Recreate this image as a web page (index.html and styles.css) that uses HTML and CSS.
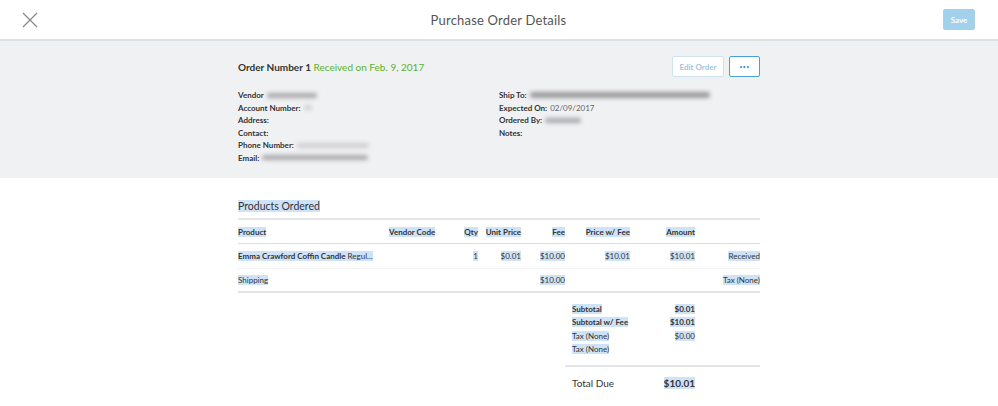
FILE: index.html
```html
<!DOCTYPE html>
<html>
<head>
<meta charset="utf-8">
<link rel="stylesheet" href="styles.css">
</head>
<body>
<header class="topbar">
  <div class="bar-left">
    <button class="close" aria-label="Close">
      <svg width="16" height="16" viewBox="0 0 16 16"><path d="M1 1L15 15M15 1L1 15" stroke="#8a8a8a" stroke-width="1.3" fill="none"/></svg>
    </button>
  </div>
  <h1 class="title">Purchase Order Details</h1>
  <div class="bar-right">
    <button class="save">Save</button>
  </div>
</header>

<section class="summary">
  <div class="wrap">
    <div class="summary-head">
      <div class="order-num"><b>Order Number 1</b> <span class="status">Received on Feb. 9, 2017</span></div>
      <div class="actions">
        <button class="btn-edit">Edit Order</button>
        <button class="btn-more">•••</button>
      </div>
    </div>
    <div class="details">
      <div class="col">
        <div class="line"><b>Vendor</b><span class="redact" style="width:50px"></span></div>
        <div class="line"><b>Account Number:</b><span class="redact light" style="width:8px"></span></div>
        <div class="line"><b>Address:</b></div>
        <div class="line"><b>Contact:</b></div>
        <div class="line"><b>Phone Number:</b><span class="redact light" style="width:72px"></span></div>
        <div class="line"><b>Email:</b><span class="redact" style="width:106px"></span></div>
      </div>
      <div class="col">
        <div class="line"><b>Ship To:</b><span class="redact wide" style="width:180px"></span></div>
        <div class="line"><b>Expected On:</b> <span class="val">02/09/2017</span></div>
        <div class="line"><b>Ordered By:</b><span class="redact" style="width:36px"></span></div>
        <div class="line"><b>Notes:</b></div>
      </div>
    </div>
  </div>
</section>

<section class="products">
  <div class="wrap">
    <h2 class="section-title"><span class="sel">Products Ordered</span></h2>
    <div class="table">
      <div class="row head">
        <div><span class="sel">Product</span></div>
        <div><span class="sel">Vendor Code</span></div>
        <div class="r"><span class="sel">Qty</span></div>
        <div class="r"><span class="sel">Unit Price</span></div>
        <div class="r"><span class="sel">Fee</span></div>
        <div class="r"><span class="sel">Price w/ Fee</span></div>
        <div class="r"><span class="sel">Amount</span></div>
        <div class="r"></div>
      </div>
      <div class="row item">
        <div class="prod"><span class="sel"><b>Emma Crawford Coffin Candle</b> Regul...</span></div>
        <div></div>
        <div class="r"><span class="sel">1</span></div>
        <div class="r"><span class="sel">$0.01</span></div>
        <div class="r"><span class="sel">$10.00</span></div>
        <div class="r"><span class="sel">$10.01</span></div>
        <div class="r"><span class="sel">$10.01</span></div>
        <div class="r"><span class="sel">Received</span></div>
      </div>
      <div class="row item last">
        <div><span class="sel">Shipping</span></div>
        <div></div>
        <div class="r"></div>
        <div class="r"></div>
        <div class="r"><span class="sel">$10.00</span></div>
        <div class="r"></div>
        <div class="r"></div>
        <div class="r"><span class="sel">Tax (None)</span></div>
      </div>
    </div>
    <div class="totals">
      <div class="tot-rows">
        <div class="trow bold"><span class="sel">Subtotal</span><span class="sel">$0.01</span></div>
        <div class="trow bold"><span class="sel">Subtotal w/ Fee</span><span class="sel">$10.01</span></div>
        <div class="trow"><span class="sel">Tax (None)</span><span class="sel">$0.00</span></div>
        <div class="trow"><span class="sel">Tax (None)</span><span></span></div>
      </div>
      <div class="trow due"><span>Total Due</span><span class="sel">$10.01</span></div>
    </div>
  </div>
</section>
</body>
</html>
```
FILE: styles.css
```css
* { box-sizing: border-box; }
html, body { margin: 0; padding: 0; }
body {
  width: 998px;
  height: 406px;
  overflow: hidden;
  background: #fff;
  font-family: "Lato", "Liberation Sans", sans-serif;
  color: #333;
}
button { font-family: inherit; cursor: pointer; }

.topbar {
  height: 41px;
  display: grid;
  grid-template-columns: 1fr auto 1fr;
  align-items: center;
  padding: 0 23px 0 22px;
  border-bottom: 2px solid #dfe0e2;
  background: #fff;
}
.bar-left { display: flex; }
.bar-right { display: flex; justify-content: flex-end; }
.close {
  background: none;
  border: 0;
  padding: 0;
  width: 16px;
  height: 16px;
  display: flex;
}
.title {
  margin: 0;
  font-weight: 400;
  font-size: 13px;
  color: #555;
  letter-spacing: 0.2px;
}
.save {
  width: 32px;
  height: 21px;
  border: 0;
  border-radius: 2px;
  background: #a2d1ec;
  color: #fff;
  font-weight: 700;
  font-size: 8px;
  padding: 0;
}

.wrap {
  width: 522px;
  margin: 0 0 0 238px;
}

.summary {
  background: #f0f1f3;
  height: 137px;
  padding-top: 15px;
}
.summary-head {
  display: flex;
  justify-content: space-between;
  align-items: center;
  height: 21px;
}
.order-num { font-size: 10px; }
.order-num b { color: #333; }
.status { color: #59b22d; }
.actions { display: flex; gap: 5px; }
.btn-edit {
  width: 52px;
  height: 21px;
  border: 1px solid #cfe3ef;
  background: #fff;
  color: #a4c4d8;
  font-size: 8px;
  font-weight: 700;
  border-radius: 2px;
  padding: 0;
}
.btn-more {
  width: 31px;
  height: 21px;
  border: 1px solid #4a9fd6;
  background: #fff;
  color: #2f8ed1;
  font-size: 5px;
  letter-spacing: 0.5px;
  border-radius: 2px;
  padding: 0;
}
.details {
  display: grid;
  grid-template-columns: 261px 261px;
  margin-top: 12px;
}
.line {
  height: 12.5px;
  font-size: 8px;
  line-height: 12.5px;
  display: flex;
  align-items: center;
  white-space: nowrap;
}
.line b { font-weight: 700; color: #333; }
.val { color: #666; margin-left: 3px; }
.redact {
  display: inline-block;
  height: 5px;
  margin-left: 3px;
  background: #a9a9ab;
  border-radius: 3px;
  filter: blur(2px);
}
.redact.light { background: #cfcfd1; }
.redact.wide { height: 6px; background: #9a9a9c; }

.products { padding-top: 21px; }
.sel { background: #cfe3f8; }
.section-title {
  margin: 0;
  font-size: 10.5px;
  font-weight: 400;
  color: #333;
  height: 19px;
  line-height: 14px;
}
.table { border-top: 2px solid #e4e5e7; }
.row {
  display: grid;
  grid-template-columns: 151px 59px 30px 43px 44px 65px 65px 65px;
  align-items: center;
  font-size: 8px;
  white-space: nowrap;
}
.row .r { text-align: right; }
.row.head {
  height: 24px;
  font-weight: 700;
  border-bottom: 1px solid #dcdde0;
}
.row.item {
  height: 24.5px;
  color: #333;
  border-bottom: 1px solid #f1f1f3;
}
.row.item.last { border-bottom: 2px solid #e2e3e5; }
.prod { overflow: hidden; }
.prod b { font-weight: 700; }

.totals {
  width: 195px;
  margin-left: 327px;
  font-size: 8px;
}
.tot-rows {
  padding: 9px 0 9px 7px;
  border-bottom: 2px solid #e4e5e7;
}
.trow {
  display: flex;
  justify-content: space-between;
  width: 123px;
  height: 13.5px;
  align-items: center;
}
.trow.bold { font-weight: 700; }
.due {
  padding-left: 7px;
  width: 130px;
  height: 31px;
  font-size: 10px;
  color: #333;
}
.due span:last-child { font-weight: 700; }
```
